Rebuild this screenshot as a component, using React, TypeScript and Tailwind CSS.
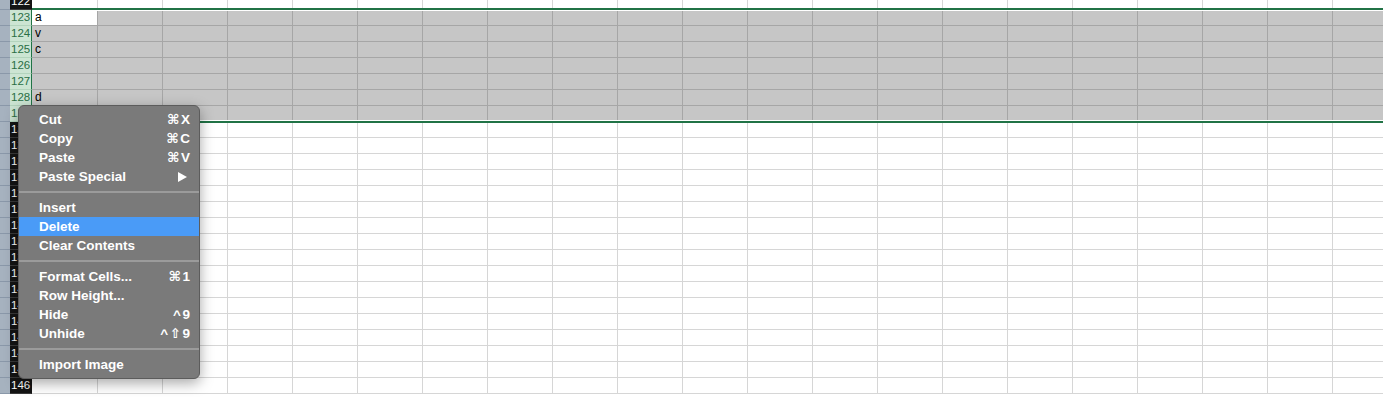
import { Fragment } from "react";

const firstRow = 122;
const lastRow = 146;
const selStart = 123;
const selEnd = 129;
const colCount = 22;

const cellText: Record<number, string> = { 123: "a", 124: "v", 125: "c", 128: "d" };

type MenuItem = { label: string; shortcut?: string; arrow?: boolean; active?: boolean } | "sep";

const menuItems: MenuItem[] = [
  { label: "Cut", shortcut: "⌘X" },
  { label: "Copy", shortcut: "⌘C" },
  { label: "Paste", shortcut: "⌘V" },
  { label: "Paste Special", arrow: true },
  "sep",
  { label: "Insert" },
  { label: "Delete", active: true },
  { label: "Clear Contents" },
  "sep",
  { label: "Format Cells...", shortcut: "⌘1" },
  { label: "Row Height..." },
  { label: "Hide", shortcut: "^9" },
  { label: "Unhide", shortcut: "^⇧9" },
  "sep",
  { label: "Import Image" },
];

function SheetRow({ n }: { n: number }) {
  const selected = n >= selStart && n <= selEnd;
  return (
    <div className="flex h-[16px]">
      <div className="w-[10px] shrink-0 bg-[#a6b2bf] border-b border-[#8a98a9]" />
      <div
        className={
          selected
            ? "w-[22px] shrink-0 bg-[#cce5d3] text-[#2a6f45] border-b border-[#b3d4bd] border-r border-r-[#217346] text-[11.5px] leading-[15px] pl-[1px] font-medium"
            : "w-[22px] shrink-0 bg-[#141414] text-white border-b border-[#3a3a3a] border-r border-r-[#141414] text-[11.5px] leading-[15px] pl-[1px] font-medium"
        }
      >
        {n}
      </div>
      {Array.from({ length: colCount }).map((_, i) => {
        const active = n === selStart && i === 0;
        const cls = active
          ? "bg-white border-[#a6a6a6]"
          : selected
          ? "bg-[#c6c6c6] border-[#a6a6a6]"
          : "bg-white border-[#d6d6d6]";
        return (
          <div
            key={i}
            className={`${i === 0 ? "w-[66px]" : "w-[65px]"} shrink-0 border-r border-b ${cls} text-[12px] leading-[15px] pl-[3px] text-black`}
          >
            {i === 0 ? cellText[n] ?? "" : ""}
          </div>
        );
      })}
    </div>
  );
}

function ContextMenu() {
  return (
    <div className="absolute left-[18px] top-[105px] w-[182px] rounded-[6px] border border-[#5c5c5c] bg-[#7a7a7a] py-[4px] shadow-[0_4px_14px_rgba(0,0,0,0.35)] text-white text-[13.5px] font-bold">
      {menuItems.map((item, i) =>
        item === "sep" ? (
          <div key={i} className="h-[12px] flex items-center">
            <div className="h-[2px] w-full bg-[#9b9b9b]" />
          </div>
        ) : (
          <div
            key={i}
            className={`h-[19px] flex items-center justify-between pl-[20px] pr-[9px] pt-[1px] ${item.active ? "bg-[#4a9bf7]" : ""}`}
          >
            <span>{item.label}</span>
            {item.shortcut && <span className="tracking-[1.5px] mr-[-1.5px]">{item.shortcut}</span>}
            {item.arrow && (
              <svg width="9" height="10" viewBox="0 0 9 10" className="mr-[3px]">
                <path d="M0 0 L9 5 L0 10 Z" fill="white" />
              </svg>
            )}
          </div>
        )
      )}
    </div>
  );
}

export default function App() {
  const rows = [];
  for (let n = firstRow; n <= lastRow; n++) rows.push(n);
  return (
    <div className="relative w-[1383px] h-[397px] overflow-hidden bg-white font-['Liberation_Sans','DejaVu_Sans',sans-serif]">
      <div className="-mt-[6px]">
        {rows.map((n) => (
          <Fragment key={n}>
            <SheetRow n={n} />
          </Fragment>
        ))}
      </div>
      {/* selection outline */}
      <div className="absolute left-[32px] right-0 top-[8px] h-[115px] border-y-2 border-[#217346]">
        <div className="h-full border-y border-white" />
      </div>
      <ContextMenu />
    </div>
  );
}
